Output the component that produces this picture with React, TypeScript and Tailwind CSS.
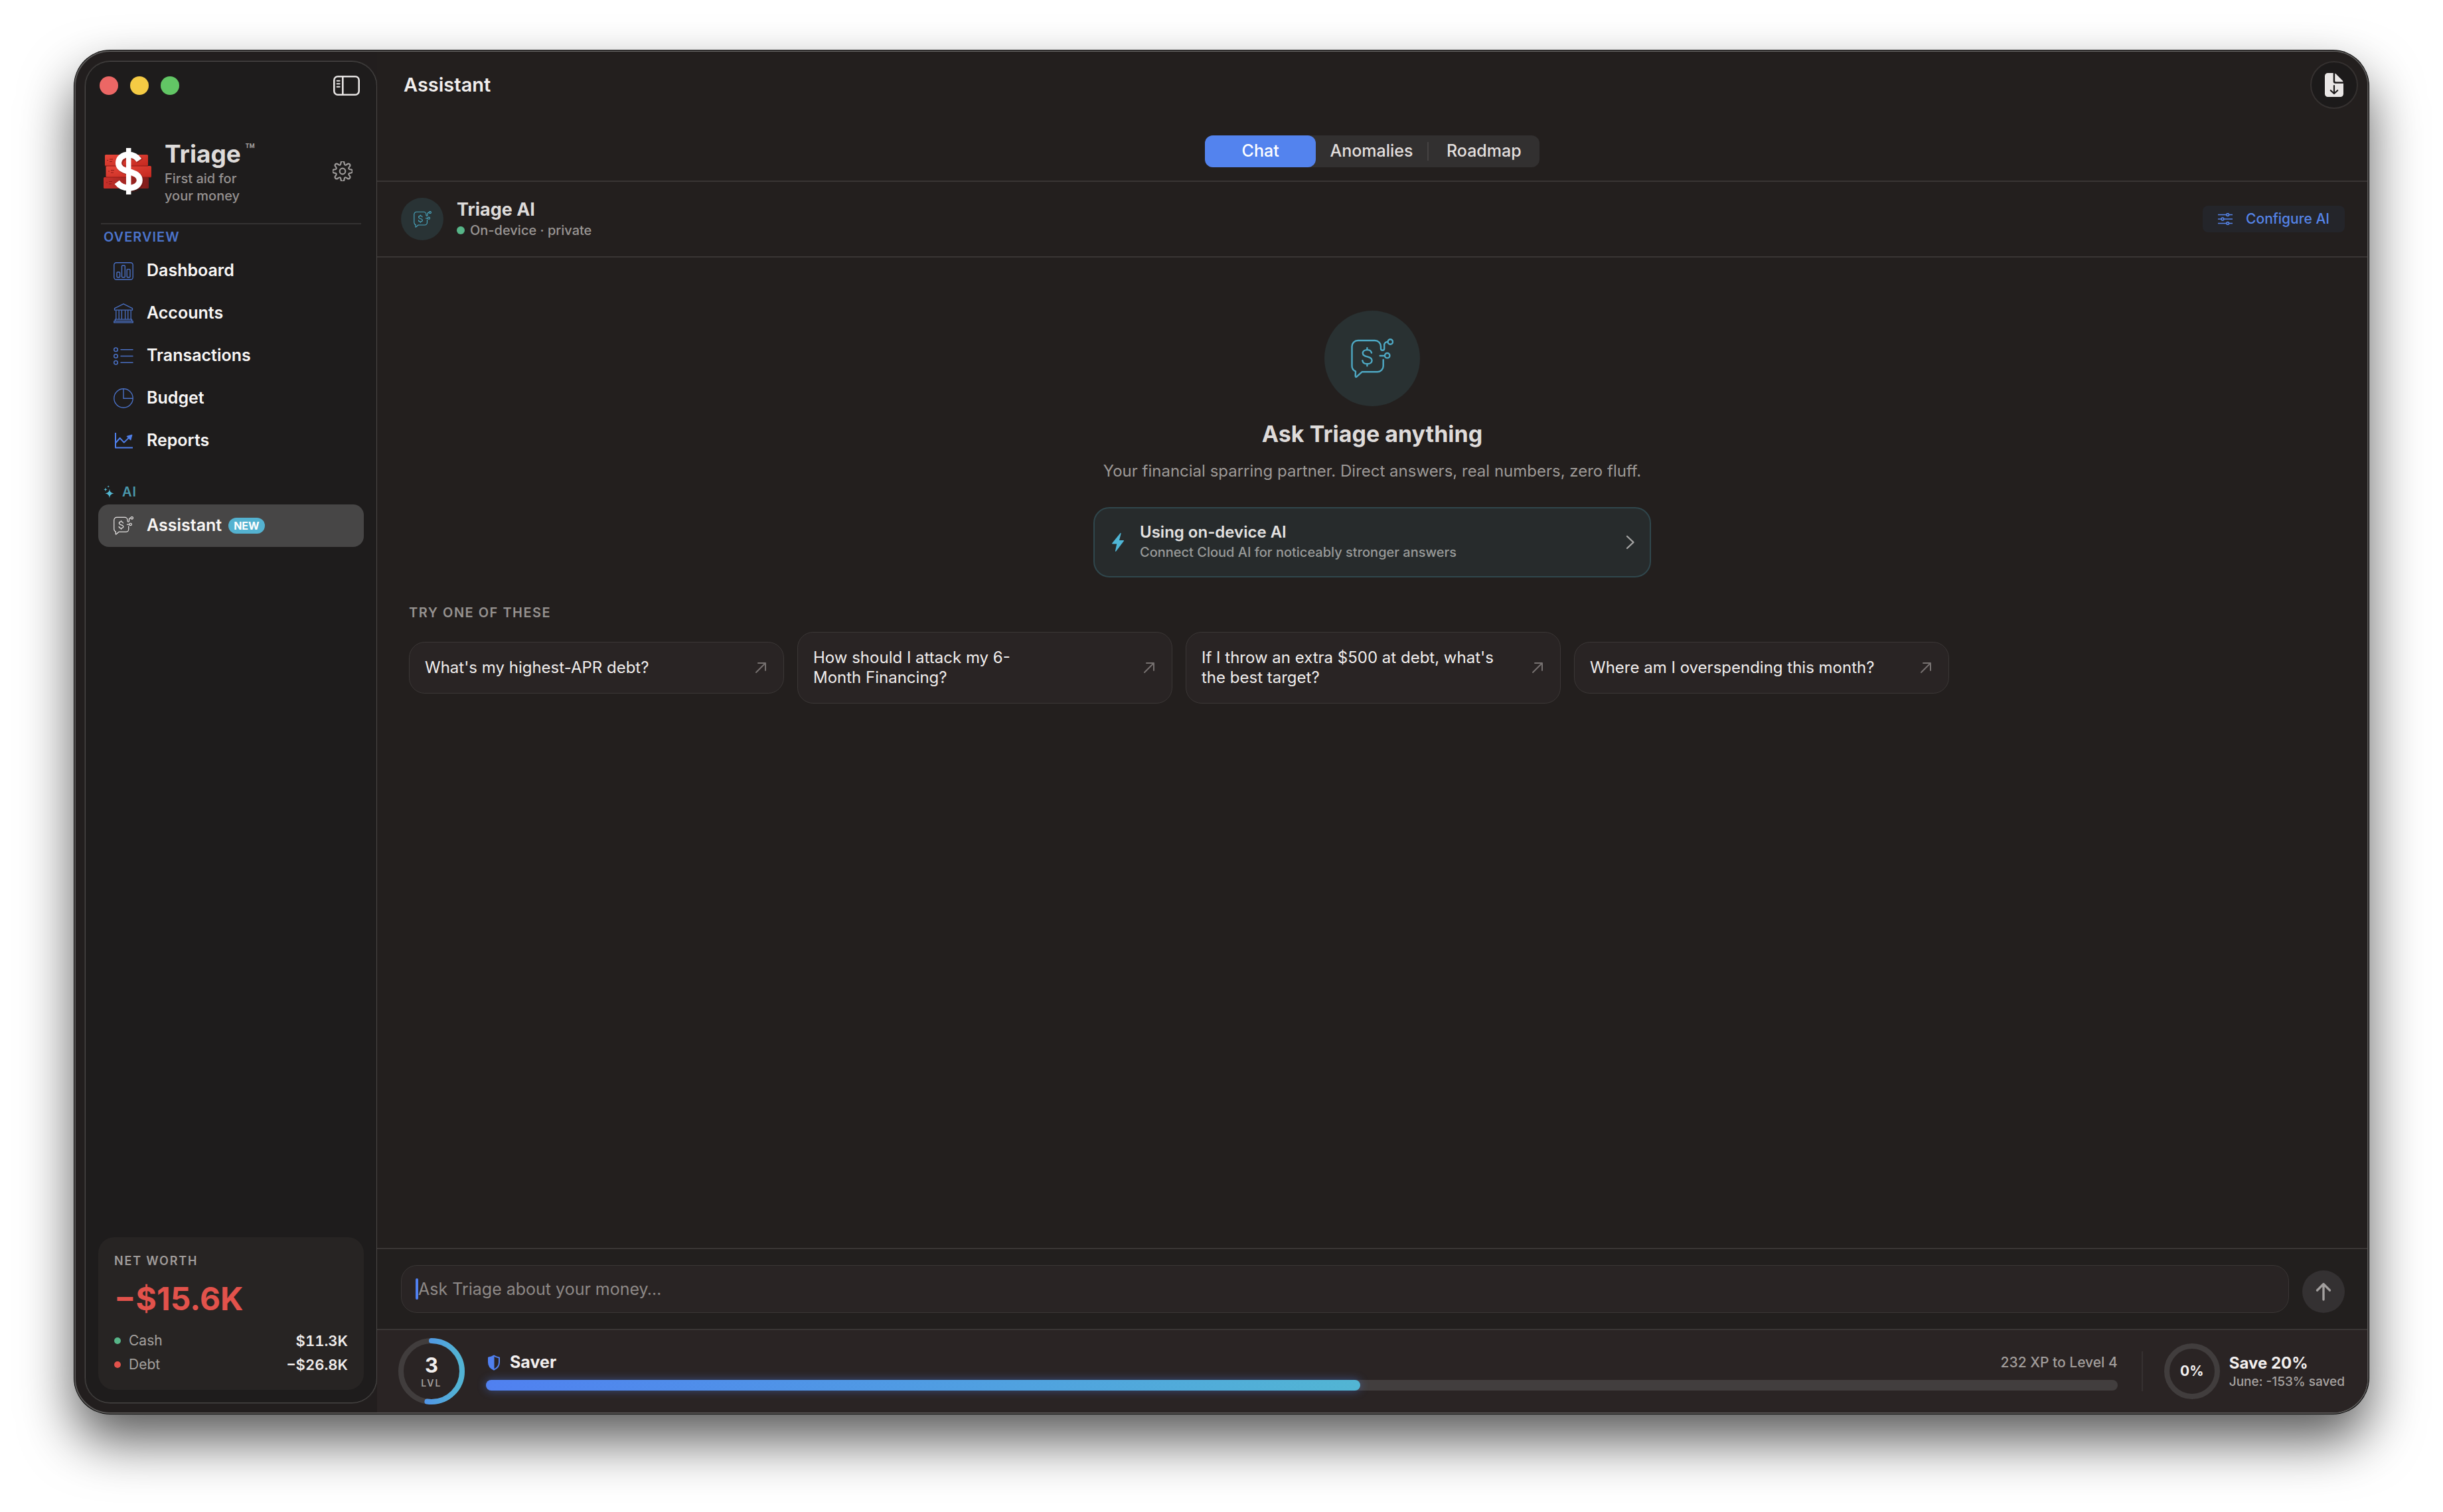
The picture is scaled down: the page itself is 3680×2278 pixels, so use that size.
import React, { type ReactNode } from "react";

type SvgProps = { className?: string };

function AssistantIcon({ className, stroke = 2 }: SvgProps & { stroke?: number }) {
  return (
    <svg viewBox="0 0 64 60" fill="none" stroke="currentColor" strokeWidth={stroke} strokeLinecap="round" strokeLinejoin="round" className={className} aria-hidden="true">
      <path d="M48.7 32v9.5a8.8 8.8 0 0 1-8.8 8.8H16.5L8.8 57.4c-1.1 1-2.2.5-2.1-1l.3-6.9c-3.4-1.5-5.5-4.500-5.5-8V12a9 9 0 0 1 9-9H36a9 9 0 0 1 9 9v3.2a2.6 2.6 0 0 0 5.2 0V10a5 5 0 0 1 5-5" />
      <circle cx="59.3" cy="5" r="3.7" />
      <path d="M43.7 26h6.8" />
      <circle cx="54.7" cy="25.7" r="3.7" />
      <path d="M31 21.5c-.7-2.8-3.3-4.4-6.6-4.4-3.8 0-6.6 2-6.6 5.1 0 6.9 13.8 3.6 13.8 10.7 0 3.2-3 5.4-7 5.4s-6.8-2-7.3-5.2M24.4 14.3v2.8M24.4 38.3v3" />
    </svg>
  );
}

function DashboardIcon() {
  return (
    <svg viewBox="0 0 30 27" fill="none" stroke="currentColor" strokeWidth="1.4" className="w-[30px] h-[27px]" aria-hidden="true">
      <rect x="0.8" y="0.8" width="28.4" height="25.4" rx="3.5" />
      <rect x="5" y="15" width="4.6" height="7.8" rx="1" />
      <rect x="12.5" y="5" width="4.8" height="17.8" rx="1" />
      <rect x="20.2" y="10.6" width="4.8" height="12.2" rx="1" />
    </svg>
  );
}

function AccountsIcon() {
  return (
    <svg viewBox="0 0 30 30" fill="none" stroke="currentColor" strokeWidth="1.3" strokeLinejoin="round" className="size-[30px]" aria-hidden="true">
      <path d="M15 .8 28.5 7.6v2.6h-27V7.6z" />
      <path d="M3.8 10.4V24M8.2 10.4V24M12.4 10.4V24M17.6 10.4V24M21.8 10.4V24M26.2 10.4V24" />
      <path d="M2.4 24.2h25.2v2.4H2.4zM.8 26.8h28.4v2.4H.8z" />
    </svg>
  );
}

function TransactionsIcon() {
  return (
    <svg viewBox="0 0 30 27" fill="none" stroke="currentColor" strokeWidth="1.5" strokeLinecap="round" className="w-[30px] h-[27px]" aria-hidden="true">
      <circle cx="3.5" cy="3.7" r="2.8" />
      <circle cx="3.5" cy="13.5" r="2.8" />
      <circle cx="3.5" cy="23.3" r="2.8" />
      <path d="M11 3.7h18M11 13.5h18M11 23.3h18" />
    </svg>
  );
}

function BudgetIcon() {
  return (
    <svg viewBox="0 0 30 30" fill="none" stroke="currentColor" strokeWidth="1.4" className="size-[30px]" aria-hidden="true">
      <circle cx="15" cy="15" r="14.2" />
      <path d="M15 .8v14.5h14.2" />
    </svg>
  );
}

function ReportsIcon() {
  return (
    <svg viewBox="0 0 28 24" fill="none" stroke="#4f7fea" strokeWidth="2" strokeLinejoin="round" className="w-[28px] h-[24px]" aria-hidden="true">
      <path d="M2 0v22.6h26" />
      <path d="M2 15.5 8.6 8l6.2 6.6L22 7.6" />
      <path d="M27 3 19 5.4l5.8 5.8z" fill="#4f7fea" strokeWidth="1" />
    </svg>
  );
}

function Sparkles() {
  return (
    <svg viewBox="0 0 16 20" fill="currentColor" className="w-4 h-5" aria-hidden="true">
      <path d="M9 5.5c.6 4.6 2 6 6.6 6.9C11 13.3 9.6 14.9 9 19.5 8.4 14.9 7 13.3 2.4 12.4 7 11.5 8.4 10.1 9 5.5z" />
      <path d="M3 3.5c.3 2 1 2.7 3 3-2 .3-2.7 1-3 3-.3-2-1-2.7-3-3 2-.3 2.7-1 3-3z" />
      <path d="M7.2.2c.2 1.2.6 1.6 1.9 1.8-1.3.2-1.7.6-1.9 1.8C7 2.6 6.6 2.2 5.3 2 6.6 1.8 7 1.4 7.2.2z" />
    </svg>
  );
}

function gearPath(teeth: number, outer: number, inner: number) {
  const step = (Math.PI * 2) / teeth;
  const pts: [number, number][] = [];
  for (let i = 0; i < teeth; i++) {
    const a = i * step - Math.PI / 2;
    for (const [offset, r] of [[-0.34, inner], [-0.2, outer], [0.2, outer], [0.34, inner]]) {
      pts.push([15 + r * Math.cos(a + offset * step), 15 + r * Math.sin(a + offset * step)]);
    }
  }
  const mid = (a: [number, number], b: [number, number]) => `${((a[0] + b[0]) / 2).toFixed(2)} ${((a[1] + b[1]) / 2).toFixed(2)}`;
  const start = mid(pts[pts.length - 1], pts[0]);
  return `M${start}${pts.map((p, i) => `Q${p[0].toFixed(2)} ${p[1].toFixed(2)} ${mid(p, pts[(i + 1) % pts.length])}`).join("")}Z`;
}

const GEAR = gearPath(8, 15.2, 10.2);

function GearIcon() {
  return (
    <svg viewBox="0 0 30 30" fill="none" stroke="currentColor" strokeWidth="2.2" className="size-[30px]" aria-hidden="true">
      <path d={GEAR} />
      <circle cx="15" cy="15" r="4.3" />
    </svg>
  );
}

function SidebarIcon() {
  return (
    <svg viewBox="0 0 40 30" fill="none" stroke="currentColor" strokeWidth="2.6" strokeLinecap="round" className="w-10 h-[30px]" aria-hidden="true">
      <rect x="1.3" y="1.3" width="37.4" height="27.4" rx="5.5" />
      <path d="M14.3 1.5v27" />
      <path d="M5.6 7.7h4M5.6 12.2h4M5.6 16.7h4" strokeWidth="2" />
    </svg>
  );
}

function ExportIcon() {
  return (
    <svg viewBox="0 0 28 36" className="w-7 h-9" aria-hidden="true">
      <path d="M4.5 0H12.7V12.5a3.2 3.2 0 0 0 3.2 3.2H28V31.5A4.5 4.5 0 0 1 23.5 36h-19A4.5 4.5 0 0 1 0 31.5v-27A4.5 4.5 0 0 1 4.5 0z" fill="#e9e6e5" />
      <path d="M15.2.4c.7.2 1.3.7 1.9 1.3l9.2 9.4c.6.6 1 1.2 1.3 2.1H16.4c-.7 0-1.2-.5-1.2-1.2z" fill="#e9e6e5" />
      <path d="M14 19v11.5M8.8 26.2 14 31l5.2-4.8" fill="none" stroke="#1c1a1a" strokeWidth="2.2" strokeLinecap="round" strokeLinejoin="round" />
    </svg>
  );
}

function SlidersIcon() {
  return (
    <svg viewBox="0 0 22 18" fill="none" stroke="currentColor" strokeWidth="1.6" className="w-[22px] h-[18px]" aria-hidden="true">
      <path d="M0 2.5h12.5M17 2.5h5M0 9h4.8M9.2 9H22M0 15.5h12.5M17 15.5h5" />
      <circle cx="14.7" cy="2.5" r="1.9" />
      <circle cx="7" cy="9" r="1.9" />
      <circle cx="14.7" cy="15.5" r="1.9" />
    </svg>
  );
}

function BrandLogo() {
  return (
    <svg viewBox="156 222 72 72" className="size-[72px] shrink-0" aria-hidden="true">
      <defs>
        <linearGradient id="bill" x1="0" y1="0" x2="1" y2="1">
          <stop offset="0" stopColor="#e5473a" />
          <stop offset="1" stopColor="#c4281f" />
        </linearGradient>
        <linearGradient id="billDark" x1="0" y1="0" x2="1" y2="0">
          <stop offset="0" stopColor="#c8302a" />
          <stop offset="1" stopColor="#7f1c1a" />
        </linearGradient>
      </defs>
      <rect x="156" y="267" width="68" height="17" rx="1.5" fill="url(#billDark)" />
      <rect x="159.5" y="250" width="68.5" height="17" rx="1.5" fill="url(#bill)" />
      <rect x="158" y="233" width="65" height="17" rx="1.5" fill="url(#bill)" />
      <path d="M158 250h65M159.5 267h68" stroke="#8e1b17" strokeWidth="1" />
      <g stroke="#8e1b17" strokeWidth="1.2" fill="none">
        <path d="M161 241.5h2M165 240h5M165 243.5h4M163 258h2M167 256.5h5M167 260h4M160 275h2M164 273.5h5M164 277h4" />
      </g>
      <path d="M211 242.5C207 237 201 235 195.5 235c-9.5 0-15.5 5-15.5 11.5 0 8 6.5 10.5 15.5 13 10 2.7 16 6 16 13.5 0 7-6.5 11.5-16 11.5" fill="none" stroke="#5f1210" strokeOpacity="0.45" strokeWidth="10" />
      <g fill="none" stroke="#ffffff">
        <path d="M209.5 241.5C205.5 235.5 200 233 193.800 233c-9 0-15.300 5-15.300 12.500 0 7.600 6.500 10.300 15.300 12.800 10 2.800 16.500 6 16.500 13.300 0 7-6.700 11.500-16.500 11.500-7.300 0-13.300-2.800-17.600-8.600" strokeWidth="9" />
        <path d="M193.700 223v70" strokeWidth="7.500" />
      </g>
    </svg>
  );
}

type NavItem = { label: string; icon: ReactNode };

const NAV: NavItem[] = [
  { label: "Dashboard", icon: <DashboardIcon /> },
  { label: "Accounts", icon: <AccountsIcon /> },
  { label: "Transactions", icon: <TransactionsIcon /> },
  { label: "Budget", icon: <BudgetIcon /> },
  { label: "Reports", icon: <ReportsIcon /> },
];

const SUGGESTIONS = [
  "What's my highest-APR debt?",
  "How should I attack my 6-\nMonth Financing?",
  "If I throw an extra $500 at debt, what's\nthe best target?",
  "Where am I overspending this month?",
];

const LEVEL_PROGRESS = 53.6;

function NavLink({ label, icon }: NavItem) {
  return (
    <a href={`#${label.toLowerCase()}`} className="flex h-16 items-center gap-5 rounded-2xl px-[23px] text-[25px] font-semibold text-[#f8f6f5]">
      <span className="flex w-[30px] justify-center text-[#4a70c4]">{icon}</span>
      {label}
    </a>
  );
}

function BalanceRow({ label, value, dot }: { label: string; value: string; dot: string }) {
  return (
    <div className="flex h-9 items-center">
      <span className={`mr-3 size-[10px] rounded-full ${dot}`} />
      <dt className="text-[21px] text-[#a5a19f]">{label}</dt>
      <dd className="ml-auto text-[22px] font-semibold text-[#f0edec] tabular-nums">{value}</dd>
    </div>
  );
}

function Sidebar() {
  return (
    <aside className="flex w-[440px] shrink-0 flex-col rounded-[38px] border border-[#4a4746] bg-[#1e1c1c] shadow-[0_0_0_1px_#302e2d]">
      <div className="flex h-[71px] items-center gap-[18px] pr-[25px] pl-[21px]">
        <button aria-label="Close" className="size-7 rounded-full bg-[#ec6765]" />
        <button aria-label="Minimize" className="size-7 rounded-full bg-[#f5cb44]" />
        <button aria-label="Zoom" className="size-7 rounded-full bg-[#62c665]" />
        <button aria-label="Toggle sidebar" className="ml-auto text-[#e6e3e2]">
          <SidebarIcon />
        </button>
      </div>

      <div className="mt-11 flex h-[100px] items-center pr-9 pl-[27px]">
        <BrandLogo />
        <div className="ml-5">
          <div className="flex">
            <h1 className="text-[37px] leading-12 font-bold text-[#dedbda]">Triage</h1>
            <span className="pt-2.5 pl-1.5 text-[24px] leading-4 font-semibold text-[#a19d9b]">™</span>
          </div>
          <p className="text-[20px] leading-[26px] font-medium text-[#959190]">
            First aid for
            <br />
            your money
          </p>
        </div>
        <button aria-label="Settings" className="ml-auto text-[#9d9a99]">
          <GearIcon />
        </button>
      </div>

      <hr className="mx-[23px] mt-7 border-t-2 border-[#343232]" />

      <nav aria-label="Main" className="px-[19px]">
        <h2 className="flex h-[38px] items-center pl-2 text-[20px] font-semibold tracking-wider text-[#4c74cb]">OVERVIEW</h2>
        {NAV.map((item) => (
          <NavLink key={item.label} {...item} />
        ))}
        <h2 className="mt-[26px] flex h-[38px] items-center gap-3 pl-2 text-[20px] font-semibold tracking-wider text-[#4a98ac]">
          <span className="text-[#54b8d2]">
            <Sparkles />
          </span>
          AI
        </h2>
        <a href="#assistant" aria-current="page" className="flex h-16 items-center rounded-2xl bg-[#474646] px-[23px] text-[25px] font-semibold text-[#f8f6f5]">
          <AssistantIcon stroke={2.6} className="mr-5 h-7 w-[30px] text-[#e6e4e3]" />
          Assistant
          <span className="ml-2.5 flex h-6 items-center rounded-full bg-[#54b2d0] px-2 text-[16px] font-bold text-white">NEW</span>
        </a>
      </nav>

      <section aria-label="Net worth" className="mx-[19px] mt-auto mb-[19px] rounded-3xl bg-[#272423] px-6 pt-6 pb-5">
        <h2 className="text-[18px] leading-6 font-semibold tracking-widest text-[#a19d9b]">NET WORTH</h2>
        <p className="text-[48px] leading-[90px] font-bold text-[#e2524b]">−$15.6K</p>
        <dl>
          <BalanceRow label="Cash" value="$11.3K" dot="bg-[#57b588]" />
          <BalanceRow label="Debt" value="−$26.8K" dot="bg-[#e2524b]" />
        </dl>
      </section>
    </aside>
  );
}

function Header() {
  return (
    <header className="border-b-2 border-[#393534]">
      <div className="flex h-[100px] items-center justify-between pr-[14px] pl-10">
        <h2 className="text-[29px] font-semibold text-[#f2efee]">Assistant</h2>
        <button aria-label="Export" className="flex size-[72px] items-center justify-center rounded-full border-2 border-[#353130] bg-[#1c1a1a]">
          <ExportIcon />
        </button>
      </div>
      <div role="tablist" className="mx-auto mt-[26px] mb-5 flex h-12 w-[504px] items-center rounded-xl bg-[#323030] text-[25px] font-medium text-[#e2dfde]">
        <button role="tab" aria-selected="true" className="h-12 flex-1 rounded-xl bg-[#5383ee] text-white">
          Chat
        </button>
        <button role="tab" aria-selected="false" className="h-12 flex-1">
          Anomalies
        </button>
        <span className="h-7 w-0.5 bg-[#454242]" />
        <button role="tab" aria-selected="false" className="h-12 flex-1">
          Roadmap
        </button>
      </div>
    </header>
  );
}

function AssistantBar() {
  return (
    <div className="flex h-[114px] items-center border-b-2 border-[#393534] pr-[34px] pl-9">
      <div className="flex size-16 items-center justify-center rounded-full bg-[#293335] text-[#4aa6bf]">
        <AssistantIcon stroke={2.8} className="h-[25px] w-[27px]" />
      </div>
      <div className="ml-5">
        <h3 className="text-[27px] leading-[34px] font-bold text-[#dedbda]">Triage AI</h3>
        <p className="flex items-center gap-2 text-[20px] leading-7 font-medium text-[#9a9694]">
          <span className="size-3 rounded-full bg-[#57b588]" />
          On-device · private
        </p>
      </div>
      <button className="ml-auto flex h-10 items-center gap-5 rounded-lg bg-[#24252a] px-[23px] text-[21px] font-medium text-[#5584e8]">
        <SlidersIcon />
        Configure AI
      </button>
    </div>
  );
}

function EmptyState() {
  return (
    <div className="flex flex-1 flex-col items-center px-12 pt-20">
      <div className="flex size-36 items-center justify-center rounded-full bg-[#293132] text-[#4ea9c4]">
        <AssistantIcon stroke={2.4} className="h-[60px] w-16" />
      </div>
      <h3 className="mt-5 text-[34px] leading-11 font-bold text-[#dedbda]">Ask Triage anything</h3>
      <p className="mt-[18px] text-[24px] leading-8 text-[#9d9997]">Your financial sparring partner. Direct answers, real numbers, zero fluff.</p>

      <button className="mt-[38px] flex w-full max-w-[840px] items-center rounded-3xl border-2 border-[#30474d] bg-[#272b2c] py-[21px] pr-[22px] pl-[26px] text-left">
        <svg viewBox="0 0 18 28" fill="#4fb6d6" className="h-7 w-[18px]" aria-hidden="true">
          <path d="M12.5.3c.7-.7 1.3-.2 1.1.6L11 11h6.2c.8 0 1.1.7.6 1.3L6.2 27.5c-.7.8-1.5.4-1.2-.5L7.2 16.5H.9c-.8 0-1.1-.7-.6-1.3z" />
        </svg>
        <span className="ml-6 flex flex-col">
          <span className="text-[24px] leading-[30px] font-semibold text-[#e3e2e1]">Using on-device AI</span>
          <span className="text-[20px] leading-[30px] font-medium text-[#989a99]">Connect Cloud AI for noticeably stronger answers</span>
        </span>
        <svg viewBox="0 0 14 22" fill="none" stroke="#a5a5a4" strokeWidth="2.4" strokeLinecap="round" strokeLinejoin="round" className="ml-auto h-[22px] w-[14px]" aria-hidden="true">
          <path d="M2 2l9.5 9L2 20" />
        </svg>
      </button>

      <section className="mt-[38px] w-full">
        <h4 className="text-[20px] leading-[30px] font-semibold tracking-[0.075em] text-[#969290]">TRY ONE OF THESE</h4>
        <div className="mt-[14px] grid max-w-[2320px] grid-cols-4 items-center gap-5">
          {SUGGESTIONS.map((text) => (
            <button key={text} className="flex items-center justify-between rounded-3xl border border-[#3b3736] bg-[#292424] px-[23px] py-[23px] text-left text-[24px] leading-[30px] text-[#f0edec]">
              <span className="whitespace-pre-line">{text}</span>
              <svg viewBox="0 0 18 18" fill="none" stroke="#767170" strokeWidth="2" strokeLinecap="round" strokeLinejoin="round" className="mr-0.5 size-[18px] shrink-0" aria-hidden="true">
                <path d="M2 16 15.5 2.5M5 2h11v11" />
              </svg>
            </button>
          ))}
        </div>
      </section>
    </div>
  );
}

function Composer() {
  return (
    <form className="flex items-end gap-5 border-t-2 border-[#393534] bg-[#221f1e] py-6 pr-[34px] pl-9">
      <div className="relative flex-1">
        <input
          type="text"
          aria-label="Ask Triage"
          placeholder="Ask Triage about your money…"
          className="block h-[72px] w-full rounded-3xl border border-[#3a3635] bg-[#292424] px-[25px] text-[25px] text-[#e6e3e2] placeholder:text-[#8e8987] focus:outline-none"
        />
        <span className="absolute top-5 left-[22px] h-8 w-1 rounded-full bg-[#5080f0]" />
      </div>
      <button type="button" aria-label="Send" className="flex size-16 items-center justify-center rounded-full bg-[#343132]">
        <svg viewBox="0 0 24 28" fill="none" stroke="#a29f9e" strokeWidth="3.4" strokeLinecap="round" strokeLinejoin="round" className="h-7 w-6" aria-hidden="true">
          <path d="M12 26V2.5M2.5 12 12 2.5l9.5 9.5" />
        </svg>
      </button>
    </form>
  );
}

function LevelFooter() {
  const circumference = 2 * Math.PI * 46;
  return (
    <footer className="flex h-[126px] items-center border-t-2 border-[#393534] bg-[#2a2424] pr-[34px] pl-8">
      <div className="relative flex size-[100px] items-center justify-center">
        <svg viewBox="0 0 100 100" fill="none" strokeWidth="8" className="absolute inset-0 size-full" aria-hidden="true">
          <defs>
            <linearGradient id="level" gradientUnits="userSpaceOnUse" x1="50" y1="0" x2="50" y2="100">
              <stop offset="0.2" stopColor="#5088ee" />
              <stop offset="0.9" stopColor="#52b3d4" />
            </linearGradient>
          </defs>
          <circle cx="50" cy="50" r="46" stroke="#413d3d" />
          <circle cx="50" cy="50" r="46" stroke="url(#level)" strokeLinecap="round" strokeDasharray={`${(circumference * LEVEL_PROGRESS) / 100 - 4} ${circumference}`} transform="rotate(-90 50 50)" />
        </svg>
        <div className="flex flex-col items-center pt-0.5">
          <span className="text-[31px] leading-[34px] font-bold text-[#f2efee]">3</span>
          <span className="text-[14px] leading-5 font-semibold tracking-[0.15em] text-[#a19d9b]">LVL</span>
        </div>
      </div>

      <div className="ml-8 flex flex-1 flex-col gap-2.5">
        <div className="flex h-8 items-center">
          <svg viewBox="0 0 20 24" className="mr-3.5 ml-0.5 h-6 w-5" aria-hidden="true">
            <path d="M10 1.500c2.500 1.800 5 2.600 8 2.900v7c0 5.300-3 8.800-8 11.100-5-2.300-8-5.800-8-11.100v-7c3-.3 5.500-1.100 8-2.900z" fill="none" stroke="#5080f0" strokeWidth="2" strokeLinejoin="round" />
            <path d="M10.500 1.500C8 3.300 5 4.100 2 4.400v7c0 5.300 3 8.800 8.500 11.100z" fill="#5080f0" />
          </svg>
          <span className="text-[25px] font-bold text-[#f2efee]">Saver</span>
          <span className="ml-auto text-[21px] font-medium text-[#a19d9b]">232 XP to Level 4</span>
        </div>
        <div role="progressbar" aria-label="Level progress" aria-valuenow={LEVEL_PROGRESS} className="h-4 rounded-full bg-[#423e3e]">
          <div className="h-4 rounded-full bg-linear-to-r from-[#5080f0] to-[#52b5d3] shadow-[0_0_14px_rgba(80,128,240,0.45)]" style={{ width: `${LEVEL_PROGRESS}%` }} />
        </div>
      </div>

      <span className="ml-9 h-[60px] w-0.5 bg-[#363131]" />

      <div className="ml-8 flex size-[84px] items-center justify-center rounded-full border-8 border-[#413d3d] text-[21px] font-bold text-[#f2efee]">0%</div>
      <div className="ml-[14px] pt-1">
        <p className="text-[24px] leading-7 font-bold text-[#f2efee]">Save 20%</p>
        <p className="text-[19px] leading-7 font-medium text-[#a6a2a0]">June: -153% saved</p>
      </div>
    </footer>
  );
}

export default function App() {
  return (
    <div className="h-screen bg-white px-28 pt-19 pb-37 font-['Inter',sans-serif]">
      <div className="flex h-full overflow-hidden rounded-[54px] border-2 border-[#5a5857] bg-[#221e1e] shadow-[0_0_0_1px_#000,0_40px_80px_rgba(0,0,0,0.65)]">
        <div className="flex py-[14px] pl-[14px]">
          <Sidebar />
        </div>
        <main className="flex min-w-0 flex-1 flex-col bg-[#231f1e]">
          <Header />
          <AssistantBar />
          <EmptyState />
          <Composer />
          <LevelFooter />
        </main>
      </div>
    </div>
  );
}
